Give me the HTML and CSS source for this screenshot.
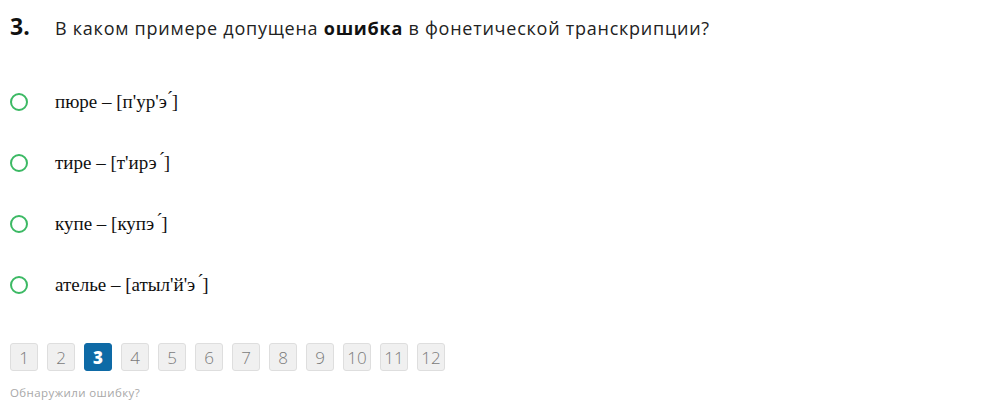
FILE: index.html
```html
<!DOCTYPE html>
<html lang="ru">
<head>
<meta charset="utf-8">
<link rel="stylesheet" href="styles.css">
</head>
<body>
<div class="quiz">
  <div class="question">
    <span class="num">3.</span>
    <span class="qtext">В каком примере допущена <b>ошибка</b> в фонетической транскрипции?</span>
  </div>
  <ul class="options">
    <li class="option"><span class="radio"></span><span class="otext">пюре – [п'ур'э<span class="acc">´</span>]</span></li>
    <li class="option"><span class="radio"></span><span class="otext">тире – [т'ирэ<span class="acc gap">´</span>]</span></li>
    <li class="option"><span class="radio"></span><span class="otext">купе – [купэ<span class="acc gap">´</span>]</span></li>
    <li class="option"><span class="radio"></span><span class="otext">ателье – [атыл'й'э<span class="acc gap">´</span>]</span></li>
  </ul>
  <div class="pager">
    <span class="page">1</span>
    <span class="page">2</span>
    <span class="page active">3</span>
    <span class="page">4</span>
    <span class="page">5</span>
    <span class="page">6</span>
    <span class="page">7</span>
    <span class="page">8</span>
    <span class="page">9</span>
    <span class="page">10</span>
    <span class="page">11</span>
    <span class="page">12</span>
  </div>
  <div class="report">Обнаружили ошибку?</div>
</div>
</body>
</html>
```
FILE: styles.css
```css
html, body {
  margin: 0;
  padding: 0;
  background: #fff;
}
.quiz {
  padding: 10px 10px 0 10px;
  font-family: "Open Sans", "Noto Sans", sans-serif;
  color: #222;
}
.question {
  display: flex;
  align-items: baseline;
  height: 30px;
}
.num {
  font-weight: 700;
  font-size: 23px;
  width: 45px;
  color: #111;
}
.qtext {
  font-size: 18px;
  letter-spacing: 0.75px;
  color: #222;
}
.qtext b {
  font-weight: 700;
  color: #111;
}
.options {
  list-style: none;
  margin: 0;
  padding: 0;
  padding-top: 50px;
  display: flex;
  flex-direction: column;
  gap: 37px;
}
.option {
  display: flex;
  align-items: center;
  height: 24px;
}
.radio {
  box-sizing: border-box;
  width: 18px;
  height: 18px;
  border: 2px solid #3cb964;
  border-radius: 50%;
  margin-right: 27px;
}
.otext {
  font-family: "Liberation Serif", "Times New Roman", serif;
  font-size: 19px;
  color: #111;
}
.acc {
  display: inline-block;
  width: 5px;
  transform: translateY(-4px);
}
.acc.gap {
  margin-left: 2px;
}
.pager {
  display: flex;
  gap: 9px;
  margin-top: 46px;
}
.page {
  box-sizing: border-box;
  width: 28px;
  height: 28px;
  display: flex;
  align-items: center;
  justify-content: center;
  background: #f0f0f0;
  border: 1px solid #dedede;
  border-radius: 3px;
  font-size: 17px;
  font-weight: 300;
  color: #7a7a7a;
}
.page.active {
  background: #0e6aa6;
  border-color: #0e6aa6;
  color: #fff;
  font-weight: 800;
}
.report {
  margin-top: 14px;
  font-size: 11.5px;
  letter-spacing: 0.4px;
  color: #a8a8a8;
}
```
